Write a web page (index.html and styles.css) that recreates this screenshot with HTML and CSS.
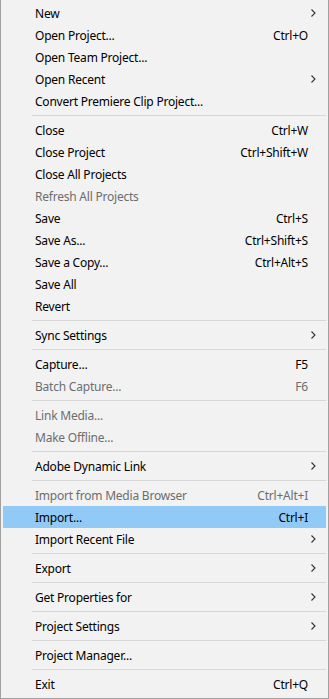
FILE: index.html
```html
<!DOCTYPE html>
<html lang="en">
<head>
    <meta charset="UTF-8">
    <title>File Menu</title>
    <link rel="stylesheet" href="styles.css">
</head>
<body>
    <div class="menu">
        <div class="item"><span class="label">New</span><span class="arrow"><svg width="5" height="8" viewBox="0 0 5 8"><path d="M0.5 0.5 L4 4 L0.5 7.5" fill="none" stroke="#333" stroke-width="1.1"/></svg></span></div>
        <div class="item"><span class="label">Open Project...</span><span class="key">Ctrl+O</span></div>
        <div class="item"><span class="label">Open Team Project...</span></div>
        <div class="item"><span class="label">Open Recent</span><span class="arrow"><svg width="5" height="8" viewBox="0 0 5 8"><path d="M0.5 0.5 L4 4 L0.5 7.5" fill="none" stroke="#333" stroke-width="1.1"/></svg></span></div>
        <div class="item"><span class="label">Convert Premiere Clip Project...</span></div>
        <div class="sep"></div>

        <div class="item"><span class="label">Close</span><span class="key">Ctrl+W</span></div>
        <div class="item"><span class="label">Close Project</span><span class="key">Ctrl+Shift+W</span></div>
        <div class="item"><span class="label">Close All Projects</span></div>
        <div class="item disabled"><span class="label">Refresh All Projects</span></div>
        <div class="item"><span class="label">Save</span><span class="key">Ctrl+S</span></div>
        <div class="item"><span class="label">Save As...</span><span class="key">Ctrl+Shift+S</span></div>
        <div class="item"><span class="label">Save a Copy...</span><span class="key">Ctrl+Alt+S</span></div>
        <div class="item"><span class="label">Save All</span></div>
        <div class="item"><span class="label">Revert</span></div>
        <div class="sep"></div>

        <div class="item"><span class="label">Sync Settings</span><span class="arrow"><svg width="5" height="8" viewBox="0 0 5 8"><path d="M0.5 0.5 L4 4 L0.5 7.5" fill="none" stroke="#333" stroke-width="1.1"/></svg></span></div>
        <div class="sep"></div>

        <div class="item"><span class="label">Capture...</span><span class="key">F5</span></div>
        <div class="item disabled"><span class="label">Batch Capture...</span><span class="key">F6</span></div>
        <div class="sep"></div>

        <div class="item disabled"><span class="label">Link Media...</span></div>
        <div class="item disabled"><span class="label">Make Offline...</span></div>
        <div class="sep"></div>

        <div class="item"><span class="label">Adobe Dynamic Link</span><span class="arrow"><svg width="5" height="8" viewBox="0 0 5 8"><path d="M0.5 0.5 L4 4 L0.5 7.5" fill="none" stroke="#333" stroke-width="1.1"/></svg></span></div>
        <div class="sep"></div>

        <div class="item disabled"><span class="label">Import from Media Browser</span><span class="key">Ctrl+Alt+I</span></div>
        <div class="item active"><span class="label">Import...</span><span class="key">Ctrl+I</span></div>
        <div class="item"><span class="label">Import Recent File</span><span class="arrow"><svg width="5" height="8" viewBox="0 0 5 8"><path d="M0.5 0.5 L4 4 L0.5 7.5" fill="none" stroke="#333" stroke-width="1.1"/></svg></span></div>
        <div class="sep"></div>

        <div class="item"><span class="label">Export</span><span class="arrow"><svg width="5" height="8" viewBox="0 0 5 8"><path d="M0.5 0.5 L4 4 L0.5 7.5" fill="none" stroke="#333" stroke-width="1.1"/></svg></span></div>
        <div class="sep"></div>

        <div class="item"><span class="label">Get Properties for</span><span class="arrow"><svg width="5" height="8" viewBox="0 0 5 8"><path d="M0.5 0.5 L4 4 L0.5 7.5" fill="none" stroke="#333" stroke-width="1.1"/></svg></span></div>
        <div class="sep"></div>

        <div class="item"><span class="label">Project Settings</span><span class="arrow"><svg width="5" height="8" viewBox="0 0 5 8"><path d="M0.5 0.5 L4 4 L0.5 7.5" fill="none" stroke="#333" stroke-width="1.1"/></svg></span></div>
        <div class="sep"></div>

        <div class="item"><span class="label">Project Manager...</span></div>
        <div class="sep"></div>

        <div class="item"><span class="label">Exit</span><span class="key">Ctrl+Q</span></div>
    </div>
</body>
</html>
```

FILE: styles.css
```css
* {
    box-sizing: border-box;
    margin: 0;
    padding: 0;
}

body {
    font-family: "Noto Sans", "Open Sans", sans-serif;
    font-size: 12px;
    letter-spacing: -0.22px;
    background-color: #f2f2f2;
}

.menu {
    width: 329px;
    height: 699px;
    background-color: #f2f2f2;
    border: 1px solid #a0a0a0;
    border-top: none;
    padding: 2px;
}

.item {
    display: flex;
    align-items: center;
    height: 22px;
    padding-left: 32px;
    padding-right: 18px;
    color: #000;
    white-space: nowrap;
}

.item.disabled {
    color: #6d6d6d;
}

.item.active {
    background-color: #91c9f7;
}

.label {
    flex: 1;
}

.key {
    text-align: right;
}

.arrow {
    display: flex;
    margin-right: -8px;
}

.sep {
    height: 7px;
    margin-left: 29px;
    display: flex;
    align-items: center;
}

.sep::after {
    content: "";
    display: block;
    width: 100%;
    height: 1px;
    background-color: #d7d7d7;
}
```
